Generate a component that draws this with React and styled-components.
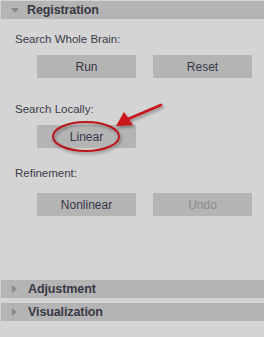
import React from 'react';
import styled, { createGlobalStyle } from 'styled-components';

const GlobalStyle = createGlobalStyle`
    html, body {
        margin: 0;
        padding: 0;
        background: #d4d4d4;
    }
`;

const Panel = styled.div`
    position: relative;
    width: 264px;
    height: 337px;
    box-sizing: border-box;
    padding: 1px 0 0 1px;
    background-color: #d4d4d4;
    display: flex;
    flex-direction: column;
    font-family: "Liberation Sans", Arial, sans-serif;
    overflow: hidden;
`;

const Header = styled.div`
    display: flex;
    align-items: center;
    height: 18px;
    margin-top: ${p => p.$gap || 0}px;
    background-color: #b4b4b4;
    color: #383844;
    font-weight: bold;
    font-size: 12.5px;
    letter-spacing: -0.1px;
`;

const Arrow = styled.span`
    display: inline-block;
    width: 0;
    height: 0;
    margin-left: ${p => (p.$open ? 10 : 11)}px;
    margin-right: ${p => (p.$open ? 8 : 11)}px;
    border-style: solid;
    border-color: transparent;
    ${p => p.$open
        ? 'border-width: 5px 4px 0 4px; border-top-color: #8a8a8a;'
        : 'border-width: 4px 0 4px 5px; border-left-color: #8a8a8a;'}
`;

const Body = styled.div`
    display: flex;
    flex-direction: column;
    padding: 13px 0 0 14px;
    height: 261px;
    box-sizing: border-box;
`;

const Label = styled.div`
    font-size: 11.5px;
    line-height: 14px;
    height: 14px;
    color: #3b3b4b;
    margin-top: ${p => p.$top || 0}px;
`;

const ButtonRow = styled.div`
    display: flex;
    gap: 17px;
    padding-left: 22px;
    margin-top: ${p => p.$top || 0}px;
`;

const Button = styled.div`
    width: 99px;
    height: 23px;
    display: flex;
    align-items: center;
    justify-content: center;
    background-color: #b4b4b4;
    color: ${p => (p.$disabled ? '#8c8c8c' : '#36364a')};
    font-size: 12px;
`;

const Callout = styled.svg`
    position: absolute;
    left: 0;
    top: 0;
    pointer-events: none;
`;

const App = () => {
    return (
        <>
            <GlobalStyle />
            <Panel>
                <Header><Arrow $open />Registration</Header>
                <Body>
                    <Label>Search Whole Brain:</Label>
                    <ButtonRow $top={9}>
                        <Button>Run</Button>
                        <Button>Reset</Button>
                    </ButtonRow>
                    <Label $top={24}>Search Locally:</Label>
                    <ButtonRow $top={9}>
                        <Button>Linear</Button>
                    </ButtonRow>
                    <Label $top={18}>Refinement:</Label>
                    <ButtonRow $top={13}>
                        <Button>Nonlinear</Button>
                        <Button $disabled>Undo</Button>
                    </ButtonRow>
                </Body>
                <Header><Arrow />Adjustment</Header>
                <Header $gap={5}><Arrow />Visualization</Header>

                <Callout width="264" height="337" viewBox="0 0 264 337">
                    <defs>
                        <filter id="shadow" x="-20%" y="-20%" width="140%" height="160%">
                            <feDropShadow dx="1.5" dy="2" stdDeviation="1.5" floodColor="#000" floodOpacity="0.35" />
                        </filter>
                    </defs>
                    <g filter="url(#shadow)">
                        <ellipse cx="86" cy="136.5" rx="33" ry="14.5" fill="none" stroke="#b8141a" strokeWidth="2" />
                        <line x1="161" y1="105" x2="128" y2="119" stroke="#c8141a" strokeWidth="2.6" strokeLinecap="round" />
                        <polygon points="116,126 124,112 133,125" fill="#c8141a" />
                    </g>
                </Callout>
            </Panel>
        </>
    );
};

export default App;
